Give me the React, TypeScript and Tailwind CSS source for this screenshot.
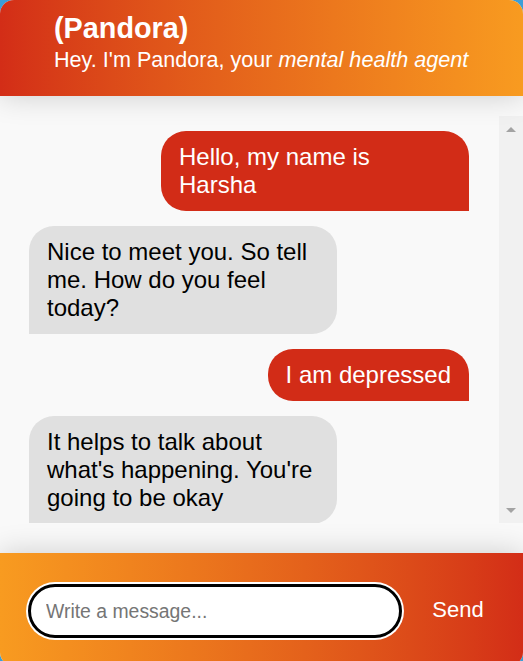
import { useState } from "react";

type Msg = { from: "user" | "bot"; text: string };

const messages: Msg[] = [
  { from: "user", text: "Hello, my name is Harsha" },
  { from: "bot", text: "Nice to meet you. So tell me. How do you feel today?" },
  { from: "user", text: "I am depressed" },
  { from: "bot", text: "It helps to talk about what's happening. You're going to be okay" },
];

export default function App() {
  const [draft, setDraft] = useState("");

  return (
    <div className="h-[661px] overflow-hidden bg-[#3b9ed8] font-['Liberation_Sans',Arial,sans-serif]">
      <div className="flex h-[666px] flex-col overflow-hidden rounded-[14px] bg-[#f9f9f9]">
        {/* Header */}
        <div className="relative z-10 h-[96px] shrink-0 bg-gradient-to-r from-[#d32d17] to-[#f89b20] pl-[54px] pt-[12px] text-white shadow-[0_0_28px_rgba(0,0,0,0.18)]">
          <div className="text-[28.8px] font-bold leading-[32px]">(Pandora)</div>
          <div className="mt-[3px] text-[21.6px] leading-[25px]">
            Hey. I'm Pandora, your <em>mental health agent</em>
          </div>
        </div>

        {/* Chat area */}
        <div className="flex flex-1 flex-col pt-[20px] pb-[30px]">
          <div className="flex h-[407px] bg-[#f9f9f9]">
            <div className="flex flex-1 flex-col gap-[15px] overflow-hidden pt-[15px] pl-[29px] pr-[30px]">
              {messages.map((m, i) => (
                <div
                  key={i}
                  className={
                    m.from === "user"
                      ? "max-w-[70%] self-end rounded-[25px] rounded-br-none bg-[#d22c17] px-[18px] py-[12px] text-[24px] leading-[28px] text-white"
                      : "max-w-[70%] self-start rounded-[25px] rounded-bl-none bg-[#e0e0e0] px-[18px] py-[12px] text-[24px] leading-[28px] text-black"
                  }
                >
                  {m.text}
                </div>
              ))}
            </div>
            {/* Scrollbar */}
            <div className="flex w-[24px] flex-col items-center justify-between bg-[#f1f1f1] pt-[11px] pb-[10px]">
              <div className="h-0 w-0 border-x-[5px] border-b-[5px] border-x-transparent border-b-[#a3a3a3]" />
              <div className="h-0 w-0 border-x-[5px] border-t-[5px] border-x-transparent border-t-[#a3a3a3]" />
            </div>
          </div>
        </div>

        {/* Footer */}
        <div className="relative z-10 flex h-[113px] shrink-0 items-start bg-gradient-to-r from-[#f89b20] to-[#d32d17] pt-[31px] pl-[28px] pr-[9px] shadow-[0_0_28px_rgba(0,0,0,0.18)]">
          <input
            autoFocus
            value={draft}
            onChange={(e) => setDraft(e.target.value)}
            placeholder="Write a message..."
            className="h-[54px] w-[374px] rounded-full border-[3px] border-black bg-white px-[15px] text-[19.4px] text-black caret-black outline-none ring-2 ring-white placeholder:text-[#757575]"
          />
          <button className="flex h-[50px] flex-1 items-center justify-center text-[22px] text-white">
            Send
          </button>
        </div>
      </div>
    </div>
  );
}
